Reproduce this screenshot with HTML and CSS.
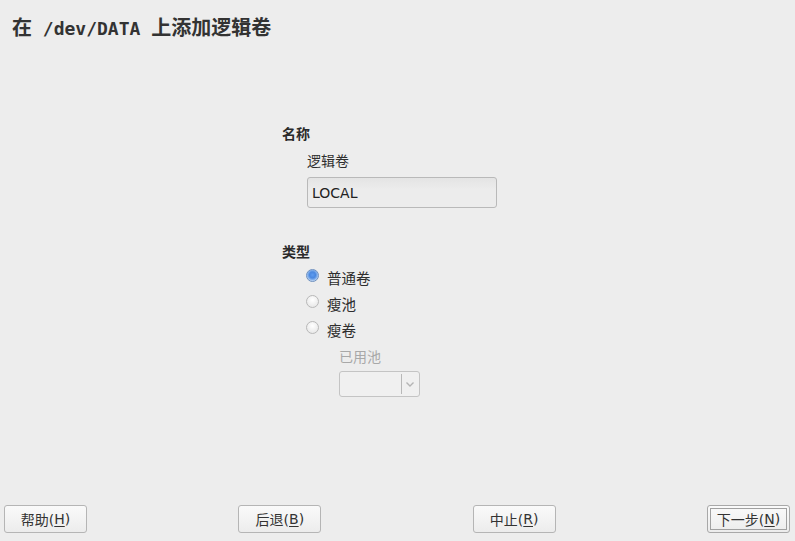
FILE: index.html
```html
<!DOCTYPE html>
<html lang="zh-CN">
<head>
<meta charset="utf-8">
<link rel="stylesheet" href="styles.css">
</head>
<body>
<div class="window">
  <h1 class="title"><span class="cjk">在</span> /dev/DATA <span class="cjk">上添加逻辑卷</span></h1>
  <main class="content">
    <div class="form">
      <section class="group">
        <div class="group-label">名称</div>
        <div class="group-body">
          <div class="field-label">逻辑卷</div>
          <div class="input">LOCAL</div>
        </div>
      </section>
      <section class="group type-group">
        <div class="group-label">类型</div>
        <div class="group-body">
          <div class="radios">
            <div class="radio-row"><span class="radio checked"></span><span>普通卷</span></div>
            <div class="radio-row"><span class="radio"></span><span>瘦池</span></div>
            <div class="radio-row"><span class="radio"></span><span>瘦卷</span></div>
          </div>
          <div class="sub">
            <div class="field-label disabled">已用池</div>
            <div class="combo"><span class="combo-text"></span><span class="combo-sep"></span><svg class="combo-arrow" width="10" height="7" viewBox="0 0 10 7"><path d="M1.5 1.5 L5 5 L8.5 1.5" fill="none" stroke="#b4b4b4" stroke-width="1.4"/></svg></div>
          </div>
        </div>
      </section>
    </div>
  </main>
  <footer class="buttons">
    <button class="btn">帮助(<u>H</u>)</button>
    <button class="btn">后退(<u>B</u>)</button>
    <button class="btn">中止(<u>R</u>)</button>
    <button class="btn focus"><span class="focus-ring">下一步(<u>N</u>)</span></button>
  </footer>
</div>
</body>
</html>
```
FILE: styles.css
```css
* { box-sizing: border-box; }
html, body { margin: 0; padding: 0; }
body {
  background: #ededed;
  font-family: "DejaVu Sans", "Noto Sans CJK SC", sans-serif;
  font-size: 14px;
  color: #2e2e2e;
}
.window {
  width: 795px;
  height: 541px;
  display: flex;
  flex-direction: column;
}
.title {
  margin: 0;
  padding: 14px 0 0 12px;
  height: 40px;
  font-family: "DejaVu Sans Mono", "Noto Sans CJK SC", monospace;
  font-weight: bold;
  font-size: 18px;
  line-height: 26px;
  color: #333;
  white-space: pre;
}
.title .cjk {
  font-family: "Noto Sans CJK SC", sans-serif;
  font-size: 20px;
}
.content {
  flex: 1;
  padding: 84px 0 0 282px;
}
.form { width: 216px; }
.group-label {
  font-weight: bold;
  line-height: 20px;
  color: #2a2a2a;
}
.group-body { padding-left: 25px; }
.field-label {
  margin-top: 7px;
  line-height: 20px;
}
.field-label.disabled { color: #a8a8a8; margin-top: 5px; }
.input {
  margin-top: 6px;
  width: 190px;
  height: 31px;
  border: 1px solid #b9b9b9;
  border-radius: 3px;
  background: linear-gradient(#e4e4e4, #ececec 40%, #ececec);
  padding: 6px 0 0 4px;
  line-height: 18px;
  color: #222;
}
.type-group { margin-top: 34px; }
.radios { margin-top: 2px; }
.radio-row {
  display: flex;
  align-items: center;
  height: 26px;
  gap: 8px;
  font-size: 14.5px;
}
.radio {
  width: 13px;
  height: 13px;
  border-radius: 50%;
  border: 1px solid #b8b8b8;
  background: radial-gradient(circle at 50% 35%, #ffffff, #e2e2e2);
  margin-left: -1px;
  margin-top: -3px;
  flex: none;
}
.radio.checked {
  border-color: #6c8fbf;
  background: radial-gradient(circle at 50% 45%, #5e9cf0 0, #4a88e0 3px, #8bb6ee 5px, #c9dcf3 6px);
}
.sub { padding-left: 32px; }
.combo {
  margin-top: 4px;
  width: 81px;
  height: 26px;
  border: 1px solid #c4c4c4;
  border-radius: 3px;
  background: #f0f0f0;
  display: flex;
  align-items: center;
}
.combo-text { flex: 1; }
.combo-sep {
  width: 1px;
  height: 20px;
  background: #b8b8b8;
}
.combo-arrow { margin: 0 4px 0 3px; }
.buttons {
  display: flex;
  justify-content: space-between;
  padding: 0 5px 8px 4px;
}
.btn {
  width: 83px;
  height: 28px;
  border: 1px solid #b5b5b5;
  border-radius: 3px;
  background: linear-gradient(#fafafa, #ececec);
  font-family: "DejaVu Sans", "Noto Sans CJK SC", sans-serif;
  font-size: 14px;
  color: #333;
  padding: 0;
  display: flex;
  align-items: center;
  justify-content: center;
}
.btn u { text-underline-offset: 2px; }
.btn.focus { border-color: #a8a8a8; padding: 2px; }
.focus-ring {
  width: 100%;
  height: 100%;
  border: 1px solid #a0a0a0;
  display: flex;
  align-items: center;
  justify-content: center;
}
```
